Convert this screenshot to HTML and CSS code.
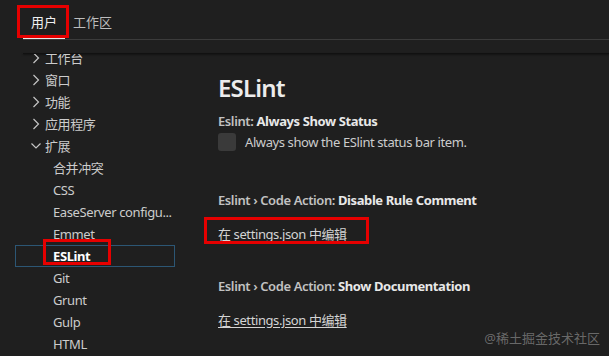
FILE: index.html
```html
<!DOCTYPE html>
<html lang="zh">
<head>
<meta charset="utf-8">
<title>设置</title>
<link rel="stylesheet" href="styles.css">
</head>
<body>
<div class="tabs">
  <div class="tab active">用户<span class="mark mark-tab"></span></div>
  <div class="tab">工作区</div>
</div>
<div class="scroll-shadow"></div>
<div class="main">
  <nav class="toc">
    <div class="toc-inner">
      <div class="row parent"><svg class="chev" viewBox="0 0 8 12"><path d="M1.5 1 L6.5 6 L1.5 11" /></svg><span>工作台</span></div>
      <div class="row parent"><svg class="chev" viewBox="0 0 8 12"><path d="M1.5 1 L6.5 6 L1.5 11" /></svg><span>窗口</span></div>
      <div class="row parent"><svg class="chev" viewBox="0 0 8 12"><path d="M1.5 1 L6.5 6 L1.5 11" /></svg><span>功能</span></div>
      <div class="row parent"><svg class="chev" viewBox="0 0 8 12"><path d="M1.5 1 L6.5 6 L1.5 11" /></svg><span>应用程序</span></div>
      <div class="row parent"><svg class="chev open" viewBox="0 0 10 12"><path d="M0.5 3.5 L5 8 L9.5 3.5" /></svg><span>扩展</span></div>
      <div class="row child">合并冲突</div>
      <div class="row child">CSS</div>
      <div class="row child">EaseServer configu...</div>
      <div class="row child">Emmet</div>
      <div class="row child selected"><span class="sel-text">ESLint</span><span class="mark mark-toc"></span></div>
      <div class="row child">Git</div>
      <div class="row child">Grunt</div>
      <div class="row child">Gulp</div>
      <div class="row child">HTML</div>
    </div>
  </nav>
  <section class="content">
    <h1 class="title">ESLint</h1>
    <div class="setting first">
      <div class="label"><span class="cat">Eslint: </span><span class="name">Always Show Status</span></div>
      <div class="check-row"><span class="checkbox"></span><span class="desc">Always show the ESlint status bar item.</span></div>
    </div>
    <div class="setting gap-big">
      <div class="label"><span class="cat">Eslint › Code Action: </span><span class="name">Disable Rule Comment</span></div>
      <div class="link-row"><a class="link">在 settings.json 中编辑</a><span class="mark mark-link"></span></div>
    </div>
    <div class="setting gap-big2">
      <div class="label"><span class="cat">Eslint › Code Action: </span><span class="name">Show Documentation</span></div>
      <div class="link-row"><a class="link">在 settings.json 中编辑</a></div>
    </div>
  </section>
</div>
<div class="watermark">@稀土掘金技术社区</div>
</body>
</html>
```
FILE: styles.css
```css
html, body {
  margin: 0;
  padding: 0;
  height: 100%;
}
body {
  background: #1f1f1f;
  color: #cccccc;
  font-family: "Noto Sans", "Noto Sans CJK SC", sans-serif;
  font-size: 13px;
  overflow: hidden;
  position: relative;
}
.tabs {
  display: flex;
  margin-left: 23px;
  border-bottom: 1px solid #3b3b3b;
}
.tab {
  position: relative;
  height: 39px;
  box-sizing: border-box;
  padding: 13px 8px 0;
  line-height: 18px;
  font-size: 13px;
  color: #bdbdbd;
  border-bottom: 1px solid transparent;
}
.tab.active {
  color: #f0f0f0;
  border-bottom-color: #e8e8e8;
}
.mark {
  position: absolute;
  border: 3px solid #e60000;
  box-sizing: border-box;
  pointer-events: none;
}
.mark-tab {
  left: -6px;
  top: 5px;
  width: 52px;
  height: 33px;
}
.scroll-shadow {
  margin: 13px 0 0 23px;
  height: 1px;
  background: #111;
  box-shadow: 0 1px 2px rgba(0,0,0,0.6);
}
.main {
  display: flex;
  height: 302px;
  overflow: hidden;
}
.toc {
  width: 160px;
  margin-left: 15px;
  flex: none;
  letter-spacing: -0.4px;
}
.toc-inner {
  margin-top: -7px;
}
.row {
  position: relative;
  height: 22px;
  line-height: 22px;
  box-sizing: border-box;
  border: 1px solid transparent;
  display: flex;
  align-items: center;
  white-space: nowrap;
  color: #cccccc;
}
.row.parent {
  padding-left: 16px;
}
.row.child {
  padding-left: 37px;
}
.chev {
  width: 8px;
  height: 12px;
  margin-right: 5px;
  fill: none;
  stroke: #c5c5c5;
  stroke-width: 1.2;
}
.chev.open {
  width: 10px;
  margin-left: -1px;
  margin-right: 4px;
}
.row.selected {
  border-color: #2c5674;
}
.sel-text {
  font-weight: 700;
  color: #ffffff;
}
.mark-toc {
  left: 27px;
  top: -7px;
  width: 68px;
  height: 26px;
}
.content {
  margin-left: 43px;
  flex: 1;
  letter-spacing: -0.4px;
}
.title {
  margin: 18px 0 0;
  font-size: 24px;
  line-height: 32px;
  font-weight: 600;
  letter-spacing: -0.8px;
  color: #ececec;
}
.setting.first {
  margin-top: 7px;
}
.gap-big {
  margin-top: 38px;
}
.gap-big2 {
  margin-top: 32px;
}
.label {
  line-height: 20px;
  color: #c2c2c2;
}
.name {
  font-weight: 700;
  color: #e8e8e8;
}
.cat {
  font-weight: 600;
}
.check-row {
  display: flex;
  align-items: center;
  margin-top: 1px;
}
.checkbox {
  width: 18px;
  height: 18px;
  border-radius: 3px;
  background: #3a3a3a;
  margin-right: 9px;
}
.desc {
  color: #cccccc;
  line-height: 20px;
}
.link-row {
  position: relative;
  margin-top: 14px;
  line-height: 20px;
}
.link {
  color: #d4d4d4;
  text-decoration: underline;
  text-underline-offset: 2px;
}
.mark-link {
  left: -14px;
  top: -7px;
  width: 165px;
  height: 27px;
}
.watermark {
  position: absolute;
  right: 9px;
  bottom: 9px;
  font-size: 13px;
  line-height: 18px;
  color: rgba(200,200,200,0.45);
}
```
